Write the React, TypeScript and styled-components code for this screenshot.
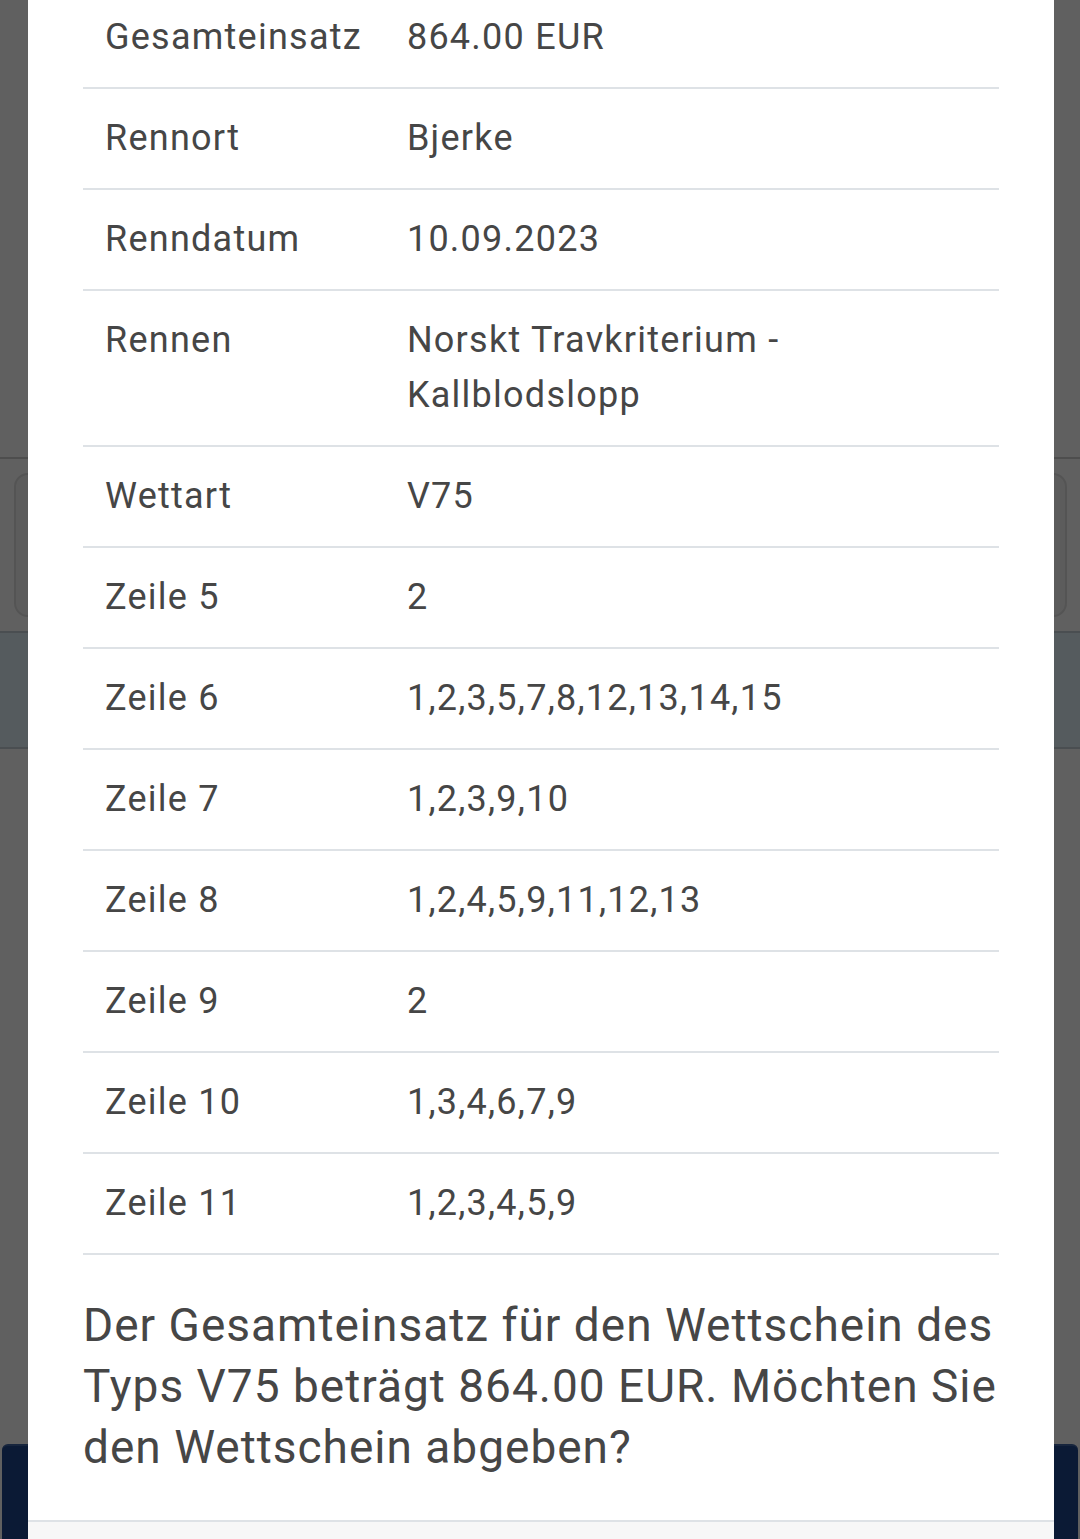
import styled, { createGlobalStyle } from 'styled-components';

const GlobalStyle = createGlobalStyle`
  html, body {
    margin: 0;
    padding: 0;
    overflow: hidden;
  }
  body {
    font-family: Roboto, "Noto Sans", "Liberation Sans", sans-serif;
  }
`

// page behind the dialog
const Page = styled.div`
  height: 1539px;
  background-color: #efefef;
  display: flex;
  flex-direction: column;
`
const PageHeader = styled.div`
  height: 457px;
  border-bottom: 2px solid #c2c2c2;
`
const PageCard = styled.div`
  margin: 14px 13px 0 14px;
  height: 140px;
  border: 2px solid #d2d2d2;
  border-radius: 14px;
  background-color: #e6e6e6;
`
const InfoBand = styled.div`
  margin-top: 14px;
  height: 114px;
  background-color: #d4e4ec;
  border-top: 2px solid #b9c4ca;
  border-bottom: 2px solid #b9c4ca;
`
const Spacer = styled.div`
  flex: 1;
`
const SubmitBar = styled.div`
  margin: 0 2px;
  height: 93px;
  background-color: #1c4286;
  border-top: 2px solid #3a5c98;
  border-radius: 6px 6px 0 0;
`

// dialog
const Backdrop = styled.div`
  position: fixed;
  inset: 0;
  background-color: rgba(0, 0, 0, 0.6);
  overflow: hidden;
`
const Dialog = styled.div`
  width: 1026px;
  margin: -12px 0 0 28px;
  background-color: #fff;
  color: #464646;
`
const Body = styled.div`
  padding: 0 55px 42px;
`
const Table = styled.table`
  width: 100%;
  border-collapse: collapse;
  font-size: 36px;
  line-height: 55px;
  letter-spacing: 1.25px;
`
const Row = styled.tr`
  border-bottom: 2px solid #dee2e6;
`
const Cell = styled.td<{ $label?: boolean }>`
  padding: 22px 23px 22px 22px;
  vertical-align: top;
  width: ${(p) => (p.$label ? '255px' : 'auto')};
  font-weight: 400;
`
const Question = styled.p`
  margin: 40px 0 0;
  font-size: 46px;
  line-height: 61px;
  letter-spacing: 1px;
`
const Footer = styled.div`
  height: 80px;
  border-top: 2px solid #dee2e6;
  background-color: #f7f7f7;
`

const rows: [string, string[]][] = [
  ['Gesamteinsatz', ['864.00 EUR']],
  ['Rennort', ['Bjerke']],
  ['Renndatum', ['10.09.2023']],
  ['Rennen', ['Norskt Travkriterium -', 'Kallblodslopp']],
  ['Wettart', ['V75']],
  ['Zeile 5', ['2']],
  ['Zeile 6', ['1,2,3,5,7,8,12,13,14,15']],
  ['Zeile 7', ['1,2,3,9,10']],
  ['Zeile 8', ['1,2,4,5,9,11,12,13']],
  ['Zeile 9', ['2']],
  ['Zeile 10', ['1,3,4,6,7,9']],
  ['Zeile 11', ['1,2,3,4,5,9']],
];

export default function App() {
  return (
    <>
      <GlobalStyle />
      <Page>
        <PageHeader />
        <PageCard />
        <InfoBand />
        <Spacer />
        <SubmitBar />
      </Page>
      <Backdrop>
        <Dialog>
          <Body>
            <Table>
              <tbody>
                {rows.map(([label, value]) => (
                  <Row key={label}>
                    <Cell $label>{label}</Cell>
                    <Cell>
                      {value.map((line, i) => (
                        <div key={i}>{line}</div>
                      ))}
                    </Cell>
                  </Row>
                ))}
              </tbody>
            </Table>
            <Question>
              Der Gesamteinsatz für den Wettschein des Typs V75 beträgt 864.00 EUR. Möchten Sie den Wettschein abgeben?
            </Question>
          </Body>
          <Footer />
        </Dialog>
      </Backdrop>
    </>
  )
}
